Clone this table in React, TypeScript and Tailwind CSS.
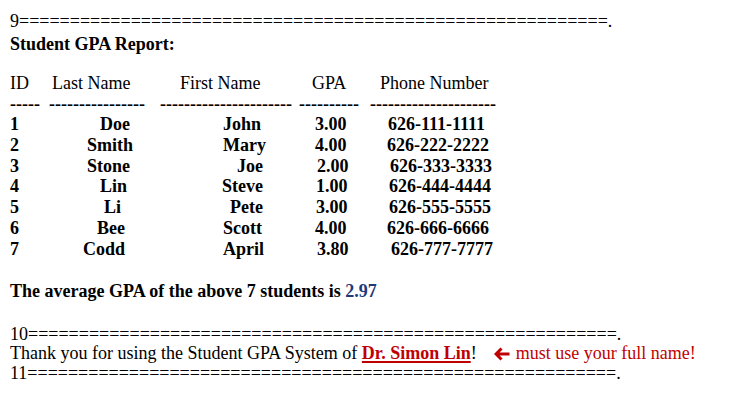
import React from "react"

const eq = "=".repeat(58)

const rows = [
  { id: "1", last: "Doe", lastPad: "pl-[51px]", first: "John", firstPad: "pl-[63px]", gpa: "3.00", gpaPad: "pl-[16px]", phone: "626-111-1111", phonePad: "pl-[18px]" },
  { id: "2", last: "Smith", lastPad: "pl-[38px]", first: "Mary", firstPad: "pl-[63px]", gpa: "4.00", gpaPad: "pl-[16px]", phone: "626-222-2222", phonePad: "pl-[17px]" },
  { id: "3", last: "Stone", lastPad: "pl-[38px]", first: "Joe", firstPad: "pl-[77px]", gpa: "2.00", gpaPad: "pl-[18px]", phone: "626-333-3333", phonePad: "pl-[20px]" },
  { id: "4", last: "Lin", lastPad: "pl-[51px]", first: "Steve", firstPad: "pl-[62px]", gpa: "1.00", gpaPad: "pl-[17px]", phone: "626-444-4444", phonePad: "pl-[19px]" },
  { id: "5", last: "Li", lastPad: "pl-[55px]", first: "Pete", firstPad: "pl-[70px]", gpa: "3.00", gpaPad: "pl-[17px]", phone: "626-555-5555", phonePad: "pl-[19px]" },
  { id: "6", last: "Bee", lastPad: "pl-[48px]", first: "Scott", firstPad: "pl-[63px]", gpa: "4.00", gpaPad: "pl-[16px]", phone: "626-666-6666", phonePad: "pl-[17px]" },
  { id: "7", last: "Codd", lastPad: "pl-[34px]", first: "April", firstPad: "pl-[63px]", gpa: "3.80", gpaPad: "pl-[18px]", phone: "626-777-7777", phonePad: "pl-[21px]" },
]

const cols = "grid grid-cols-[39px_111px_139px_71px_123px]"

function LeftArrow() {
  return (
    <svg width="16" height="14" viewBox="0 0 16 14" className="text-[#c00000]">
      <path d="M7.5 1.5 L2 7 L7.5 12.5 M2 7 H15.5" fill="none" stroke="currentColor" strokeWidth="3" />
    </svg>
  )
}

export default function App() {
  return (
    <div className="w-[733px] h-[400px] bg-white text-black font-['Liberation_Serif','Times_New_Roman',serif] text-[18px] leading-[20px] pl-[10px] pt-[11px] whitespace-pre">
      <div>9{eq}.</div>
      <div className="mt-[3px] font-bold">Student GPA Report:</div>

      {/* table header */}
      <div className={`${cols} mt-[19px]`}>
        <div>ID</div>
        <div className="pl-[3px]">Last Name</div>
        <div className="pl-[20px]">First Name</div>
        <div className="pl-[13px]">GPA</div>
        <div className="pl-[10px]">Phone Number</div>
      </div>
      <div className={`${cols} font-bold mt-[1px]`}>
        <div>-----</div>
        <div>{"-".repeat(16)}</div>
        <div>{"-".repeat(22)}</div>
        <div>{"-".repeat(10)}</div>
        <div>{"-".repeat(21)}</div>
      </div>

      {/* rows */}
      <div className="font-bold">
        {rows.map((r) => (
          <div key={r.id} className={`${cols} leading-[20.8px]`}>
            <div>{r.id}</div>
            <div className={r.lastPad}>{r.last}</div>
            <div className={r.firstPad}>{r.first}</div>
            <div className={r.gpaPad}>{r.gpa}</div>
            <div className={r.phonePad}>{r.phone}</div>
          </div>
        ))}
      </div>

      <div className="mt-[21px] font-bold">
        The average GPA of the above 7 students is <span className="text-[#1f3a78]">2.97</span>
      </div>

      <div className="mt-[24px] leading-[19.5px]">
        <div>10{eq}.</div>
        <div className="flex items-center">
          <span>Thank you for using the Student GPA System of </span>
          <span className="font-bold text-[#c00000] underline decoration-2 underline-offset-2">Dr. Simon Lin</span>
          <span>!</span>
          <span className="ml-[17px] mr-[6px]">
            <LeftArrow />
          </span>
          <span className="text-[#c00000]">must use your full name!</span>
        </div>
        <div>11{eq}.</div>
      </div>
    </div>
  )
}
